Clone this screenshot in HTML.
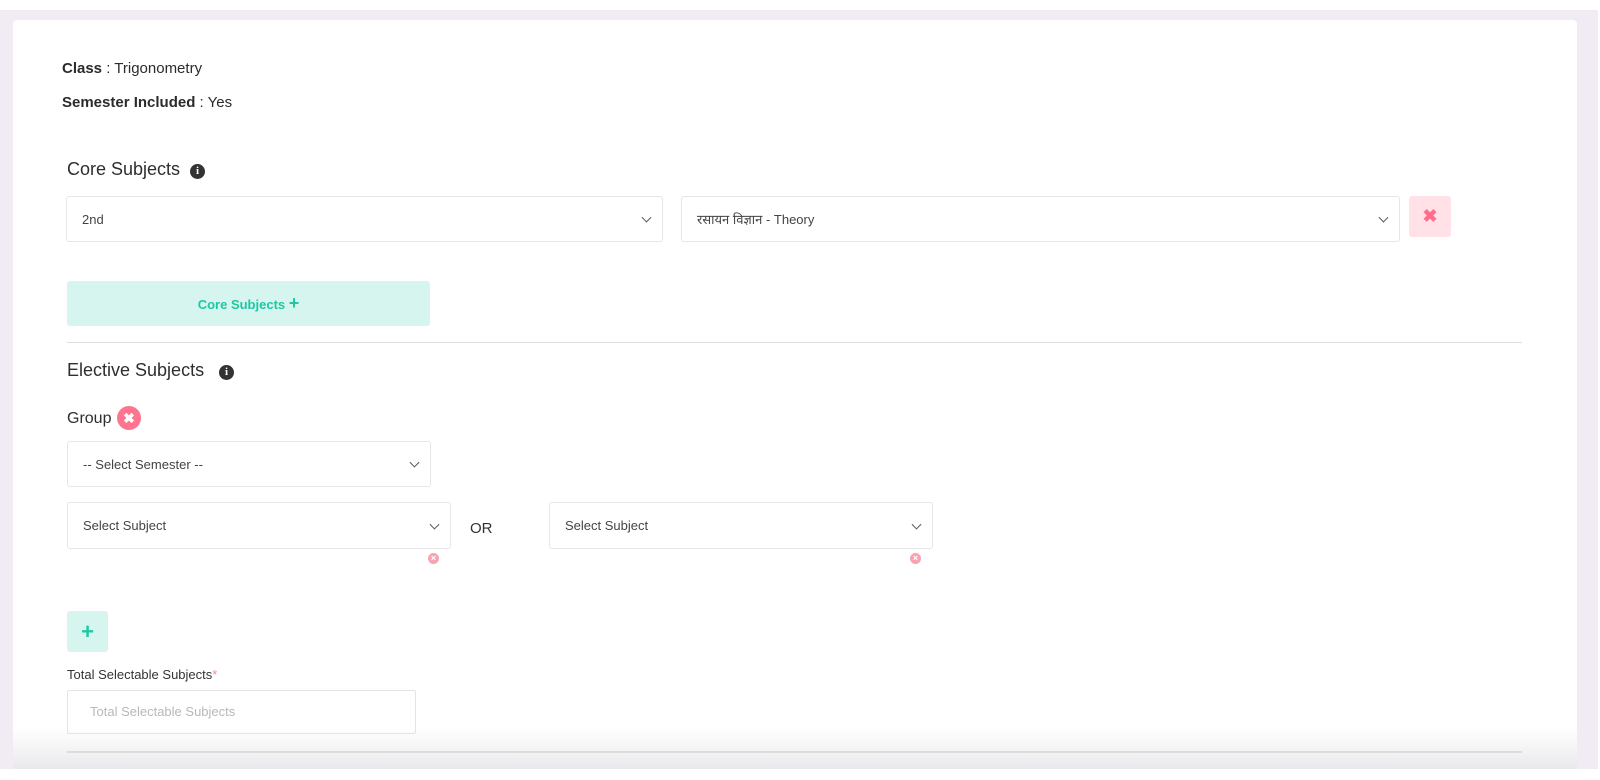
<!DOCTYPE html>
<html><head><meta charset="utf-8"><style>
*{box-sizing:border-box;margin:0;padding:0}
body{width:1600px;height:769px;overflow:hidden;background:#fff;font-family:"Liberation Sans","Noto Sans CJK SC",sans-serif;color:#333;position:relative}
.bg{position:absolute;left:0;top:10px;width:1598px;height:759px;background:#f1ebf4}
.card{position:absolute;left:13px;top:20px;width:1564px;height:760px;background:#fff;border-radius:4px}
.abs{position:absolute}
.t{font-size:15px;color:#2b2b2b}
.h{font-size:18px;color:#2e2e2e}
.sel{position:absolute;border:1px solid #e6e6e6;border-radius:3px;background:#fff;font-size:13px;color:#444;padding-left:15px;display:flex;align-items:center}
.sel::after{content:"";position:absolute;right:12px;top:50%;width:6px;height:6px;border-right:1px solid #555;border-bottom:1px solid #555;transform:translateY(-70%) rotate(45deg)}
.info{display:inline-block;width:15px;height:15px;border-radius:50%;background:#333;color:#fff;font-size:11px;font-weight:bold;text-align:center;line-height:15px;font-family:"Liberation Serif",serif;vertical-align:1px}
.hr{position:absolute;left:67px;width:1455px;height:1px;background:#dedede}
.sx{position:absolute;width:11px;height:11px;border-radius:50%;background:#f7a3b3;color:#fff;font-size:9px;line-height:11px;text-align:center;font-weight:bold}
</style></head><body>
<div class="bg"></div>
<div class="card"></div>
<div class="abs t" style="left:62px;top:60px"><b style="font-weight:600">Class</b> : Trigonometry</div>
<div class="abs t" style="left:62px;top:94px"><b style="font-weight:600">Semester Included</b> : Yes</div>
<div class="abs h" style="left:67px;top:159px">Core Subjects &nbsp;<span class="info">i</span></div>
<div class="sel" style="left:66px;top:196px;width:597px;height:46px">2nd</div>
<div class="sel" style="left:681px;top:196px;width:719px;height:46px">रसायन विज्ञान - Theory</div>
<div class="abs" style="left:1409px;top:196px;width:42px;height:41px;background:#ffe1e7;border-radius:3px;color:#ff6f8b;font-size:18px;font-weight:bold;text-align:center;line-height:41px">✖</div>
<div class="abs" style="left:67px;top:281px;width:363px;height:45px;background:#d6f5ef;border-radius:3px;color:#1fc8a3;font-size:13px;font-weight:bold;text-align:center;line-height:45px">Core Subjects <span style="font-size:18px">+</span></div>
<div class="hr" style="top:342px"></div>
<div class="abs h" style="left:67px;top:360px">Elective Subjects &nbsp;&nbsp;<span class="info">i</span></div>
<div class="abs" style="left:67px;top:410px;font-size:16px;color:#2e2e2e">Group</div>
<div class="abs" style="left:117px;top:406px;width:24px;height:24px;border-radius:50%;background:#ff758f;color:#fff;font-size:14px;font-weight:bold;text-align:center;line-height:24px">✖</div>
<div class="sel" style="left:67px;top:441px;width:364px;height:46px">-- Select Semester --</div>
<div class="sel" style="left:67px;top:502px;width:384px;height:47px">Select Subject</div>
<div class="abs" style="left:470px;top:520px;font-size:15px;color:#333">OR</div>
<div class="sel" style="left:549px;top:502px;width:384px;height:47px">Select Subject</div>
<div class="sx" style="left:428px;top:553px">×</div>
<div class="sx" style="left:910px;top:553px">×</div>
<div class="abs" style="left:67px;top:611px;width:41px;height:41px;background:#d6f5ef;border-radius:3px;color:#1fc8a3;font-size:22px;font-weight:bold;text-align:center;line-height:41px">+</div>
<div class="abs" style="left:67px;top:667px;font-size:13px;color:#333">Total Selectable Subjects<span style="color:#f48aa0">*</span></div>
<div class="abs" style="left:67px;top:690px;width:349px;height:44px;border:1px solid #e4e4e4;border-radius:2px;font-size:13px;color:#b8b8b8;padding-left:22px;line-height:42px">Total Selectable Subjects</div>
<div class="abs" style="left:13px;top:728px;width:1564px;height:41px;background:linear-gradient(#fff0,#e9e8ec)"></div>
<div class="hr" style="top:751px;height:2px;background:#dcdcdc"></div>
</body></html>
